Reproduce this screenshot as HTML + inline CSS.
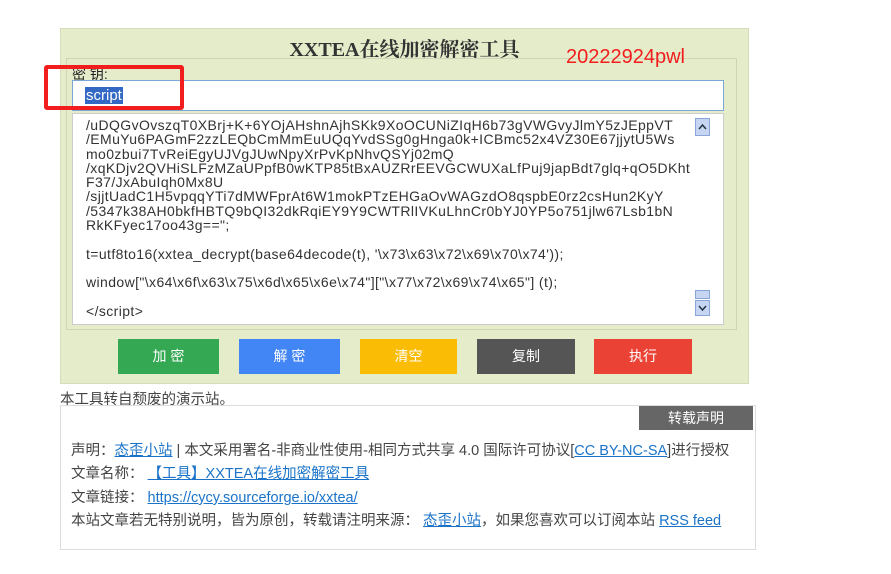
<!DOCTYPE html>
<html><head><meta charset="utf-8"><style>
body{margin:0;width:891px;height:574px;background:#fff;position:relative;font-family:"Liberation Sans","Noto Sans CJK SC",sans-serif;overflow:hidden}
.abs{position:absolute}
.outer{left:60px;top:28px;width:687px;height:354px;background:#e4ecca;border:1px solid #d4dcbc}
.title{left:60px;top:33px;width:689px;text-align:center;font-size:20px;font-weight:bold;color:#333;font-family:"Liberation Serif","Noto Serif CJK SC",serif}
.fs{left:66px;top:58px;width:669px;height:270px;border:1px solid #cfd6b8}
.lab{left:72px;top:64px;font-size:14px;color:#222}
.key{left:72px;top:80px;width:650px;height:29px;background:#fff;border:1px solid #7aa7d6}
.sel{left:85px;top:87px;background:#3368c4;color:#fff;font-size:15px;line-height:17px;padding:0 1px}
.ta{left:72px;top:113px;width:650px;height:210px;background:#fff;border:1px solid #ccc}
.code{left:86px;top:118px;font-size:14px;line-height:14.3px;color:#333;white-space:pre;letter-spacing:0.4px}
.sb{left:695px;top:118px;width:15px;height:198px}
.btn{top:339px;height:35px;color:#fff;font-size:14px;text-align:center;line-height:35px}
.cap{left:60px;top:388px;font-size:14.5px;color:#444}
.box{left:60px;top:405px;width:694px;height:143px;border:1px solid #ddd}
.tab{left:639px;top:406px;width:114px;height:24px;background:#666;color:#fff;font-size:14px;text-align:center;line-height:24px}
.ln{left:71px;font-size:14.5px;color:#444;white-space:nowrap}
a{color:#1a73c8;text-decoration:underline}
</style></head><body>
<div class="abs outer"></div>
<div class="abs title">XXTEA在线加密解密工具</div>
<div class="abs fs"></div>
<div class="abs" style="left:566px;top:46px;color:#f21d1d;font-size:20px">20222924pwl</div>
<div class="abs lab">密 钥:</div>
<div class="abs key"></div>
<div class="abs sel">script</div>
<div class="abs ta"></div>
<div class="abs code">/uDQGvOvszqT0XBrj+K+6YOjAHshnAjhSKk9XoOCUNiZIqH6b73gVWGvyJlmY5zJEppVT
/EMuYu6PAGmF2zzLEQbCmMmEuUQqYvdSSg0gHnga0k+ICBmc52x4VZ30E67jjytU5Ws
mo0zbui7TvReiEgyUJVgJUwNpyXrPvKpNhvQSYj02mQ
/xqKDjv2QVHiSLFzMZaUPpfB0wKTP85tBxAUZRrEEVGCWUXaLfPuj9japBdt7glq+qO5DKht
F37/JxAbuIqh0Mx8U
/sjjtUadC1H5vpqqYTi7dMWFprAt6W1mokPTzEHGaOvWAGzdO8qspbE0rz2csHun2KyY
/5347k38AH0bkfHBTQ9bQI32dkRqiEY9Y9CWTRlIVKuLhnCr0bYJ0YP5o751jlw67Lsb1bN
RkKFyec17oo43g==";

t=utf8to16(xxtea_decrypt(base64decode(t), '\x73\x63\x72\x69\x70\x74'));

window["\x64\x6f\x63\x75\x6d\x65\x6e\x74"]["\x77\x72\x69\x74\x65"] (t);

&lt;/script&gt;</div>
<svg class="abs sb" viewBox="0 0 15 198"><rect x="0.5" y="0.5" width="14" height="17" fill="#c6d6f2" stroke="#8aa6d8"/><path d="M4 11l3.5-4 3.5 4" stroke="#234" fill="none" stroke-width="1.5"/><rect x="0.5" y="172.5" width="14" height="8" fill="#c6d6f2" stroke="#8aa6d8"/><rect x="0.5" y="182.5" width="14" height="15" fill="#c6d6f2" stroke="#8aa6d8"/><path d="M4 188l3.5 4 3.5-4" stroke="#234" fill="none" stroke-width="1.5"/></svg>
<div class="abs" style="left:44px;top:65px;width:132px;height:37px;border:4px solid #f21d1d;border-radius:3px"></div>
<div class="abs btn" style="left:118px;width:101px;background:#34a853">加 密</div>
<div class="abs btn" style="left:239px;width:101px;background:#4285f4">解 密</div>
<div class="abs btn" style="left:360px;width:97px;background:#fbbc05">清空</div>
<div class="abs btn" style="left:477px;width:98px;background:#555">复制</div>
<div class="abs btn" style="left:594px;width:98px;background:#ea4335">执行</div>
<div class="abs cap">本工具转自颓废的演示站。</div>
<div class="abs box"></div>
<div class="abs tab">转载声明</div>
<div class="abs ln" style="top:439px">声明：<a>态歪小站</a> | 本文采用署名-非商业性使用-相同方式共享 4.0 国际许可协议[<a>CC BY-NC-SA</a>]进行授权</div>
<div class="abs ln" style="top:462px">文章名称： <a>【工具】XXTEA在线加密解密工具</a></div>
<div class="abs ln" style="top:486px">文章链接： <a>https://cycy.sourceforge.io/xxtea/</a></div>
<div class="abs ln" style="top:509px">本站文章若无特别说明，皆为原创，转载请注明来源： <a>态歪小站</a>，如果您喜欢可以订阅本站 <a>RSS feed</a></div>
</body></html>
